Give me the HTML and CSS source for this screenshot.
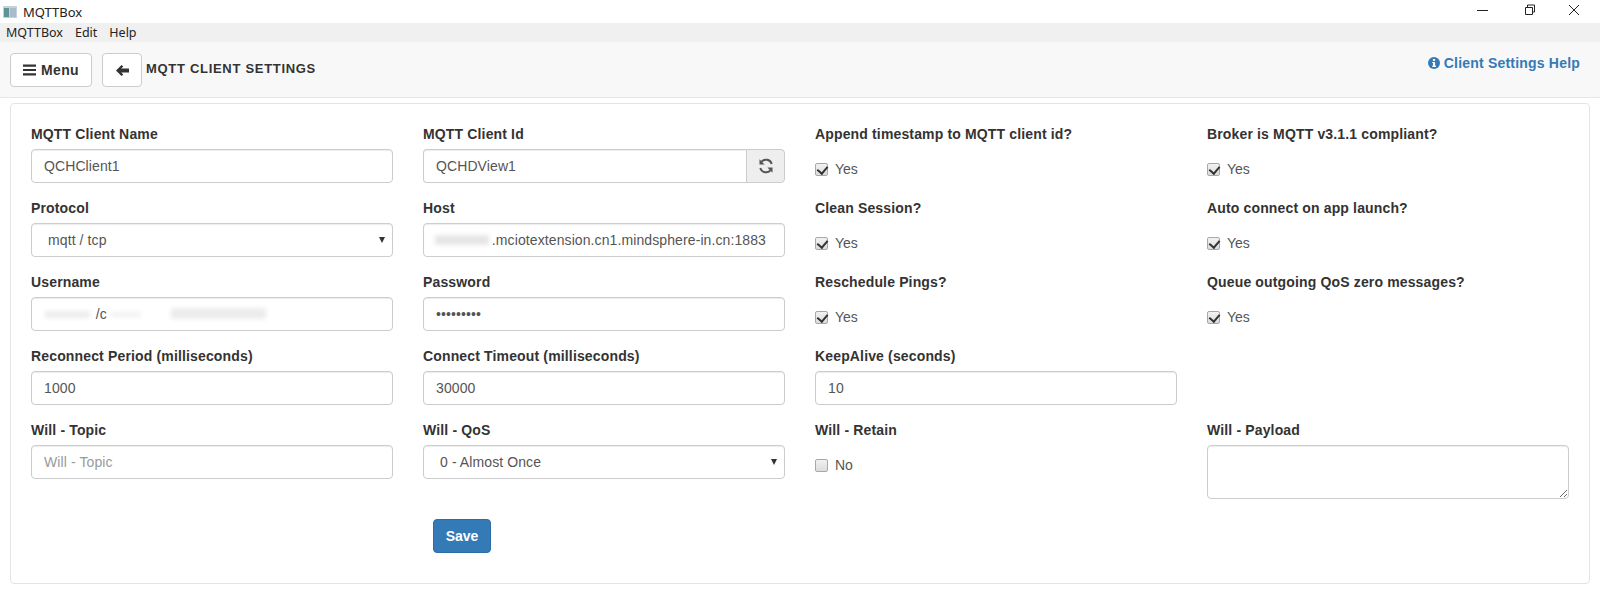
FILE: index.html
```html
<!DOCTYPE html>
<html lang="en">
<head>
<meta charset="utf-8">
<title>MQTTBox</title>
<link rel="stylesheet" href="styles.css">
</head>
<body>
<div class="titlebar">
  <div class="title-left">
    <svg class="app-icon" width="14" height="12" viewBox="0 0 14 12"><rect x="0" y="0" width="14" height="12" fill="#c5d2d6"/><rect x="1" y="2" width="5" height="9" fill="#5f9494"/><rect x="7" y="2" width="6" height="9" fill="#a9bccb"/></svg>
    <span>MQTTBox</span>
  </div>
  <div class="win-controls">
    <svg width="46" height="22" viewBox="0 0 46 22"><path d="M17 10.500h11" stroke="#222" fill="none"/></svg>
    <svg width="46" height="22" viewBox="0 0 46 22"><path d="M19.500 7.500h7v7h-7zM21.500 7.500v-2.500h7v7h-2" stroke="#222" fill="none"/></svg>
    <svg width="46" height="22" viewBox="0 0 46 22"><path d="M17 5l10 10M27 5l-10 10" stroke="#222" fill="none"/></svg>
  </div>
</div>
<div class="menubar"><span>MQTTBox</span><span>Edit</span><span>Help</span></div>
<nav class="navbar">
  <div class="nav-left">
    <button class="btn menu-btn" type="button">
      <svg width="13" height="12" viewBox="0 0 13 12"><path d="M0 0.500h13v2.200H0zM0 4.900h13v2.200H0zM0 9.300h13v2.200H0z" fill="#333"/></svg>
      <b>Menu</b>
    </button>
    <button class="btn back-btn" type="button">
      <svg width="13" height="11" viewBox="0 0 13 11"><path d="M5.500 0L7.300 1.600 5.200 3.600H13V7.400H5.200L7.300 9.400 5.500 11 0 5.500z" fill="#333"/></svg>
    </button>
    <b class="nav-title">MQTT CLIENT SETTINGS</b>
  </div>
  <a class="help-link" href="#">
    <svg width="12" height="12" viewBox="0 0 12 12"><circle cx="6" cy="6" r="6" fill="#337ab7"/><rect x="4.900" y="2" width="2.200" height="1.900" fill="#fff"/><path d="M4.200 4.900H7.100V8.800H8V10H4.200V8.800H5V6.100H4.200z" fill="#fff"/></svg>
    <b>Client Settings Help</b>
  </a>
</nav>
<main class="panel">
  <form class="form-grid">
    <div class="field"><label>MQTT Client Name</label><input class="control" type="text" value="QCHClient1"></div>
    <div class="field"><label>MQTT Client Id</label>
      <div class="input-group"><input class="control" type="text" value="QCHDView1"><span class="addon">
        <svg width="16" height="16" viewBox="0 0 14 14"><path d="M12 5.200A5.200 5.200 0 0 0 3 3.400M2 8.800A5.200 5.200 0 0 0 11 10.600" fill="none" stroke="#555" stroke-width="1.700"/><path d="M1.300 1.200v4.500h4.500zM12.700 12.800v-4.500h-4.500z" fill="#555"/></svg>
      </span></div>
    </div>
    <div class="field"><label>Append timestamp to MQTT client id?</label><div class="check"><input type="checkbox" checked><span>Yes</span></div></div>
    <div class="field"><label>Broker is MQTT v3.1.1 compliant?</label><div class="check"><input type="checkbox" checked><span>Yes</span></div></div>

    <div class="field"><label>Protocol</label><div class="select-wrap"><select class="control"><option>mqtt / tcp</option></select></div></div>
    <div class="field"><label>Host</label><div class="masked"><input class="control" type="text" value="              .mciotextension.cn1.mindsphere-in.cn:1883"><i class="smudge smudge-host"></i></div></div>
    <div class="field"><label>Clean Session?</label><div class="check"><input type="checkbox" checked><span>Yes</span></div></div>
    <div class="field"><label>Auto connect on app launch?</label><div class="check"><input type="checkbox" checked><span>Yes</span></div></div>

    <div class="field"><label>Username</label><div class="masked"><input class="control" type="text" value="             /c"><i class="smudge smudge-user-a"></i><i class="smudge smudge-user-b"></i><i class="smudge smudge-user-c"></i></div></div>
    <div class="field"><label>Password</label><input class="control" type="password" value="123456789"></div>
    <div class="field"><label>Reschedule Pings?</label><div class="check"><input type="checkbox" checked><span>Yes</span></div></div>
    <div class="field"><label>Queue outgoing QoS zero messages?</label><div class="check"><input type="checkbox" checked><span>Yes</span></div></div>

    <div class="field"><label>Reconnect Period (milliseconds)</label><input class="control" type="text" value="1000"></div>
    <div class="field"><label>Connect Timeout (milliseconds)</label><input class="control" type="text" value="30000"></div>
    <div class="field"><label>KeepAlive (seconds)</label><input class="control" type="text" value="10"></div>
    <div class="field"></div>

    <div class="field"><label>Will - Topic</label><input class="control" type="text" placeholder="Will - Topic"></div>
    <div class="field"><label>Will - QoS</label><div class="select-wrap"><select class="control"><option>0 - Almost Once</option></select></div></div>
    <div class="field"><label>Will - Retain</label><div class="check"><input type="checkbox"><span>No</span></div></div>
    <div class="field"><label>Will - Payload</label><textarea class="control payload"></textarea></div>

    <div class="save-cell"></div>
    <div class="save-cell"><button class="save" type="button">Save</button></div>
  </form>
</main>
</body>
</html>
```
FILE: styles.css
```css
* { box-sizing: border-box; }
html, body { margin: 0; padding: 0; }
body {
  width: 1600px;
  height: 590px;
  overflow: hidden;
  background: #fff;
  color: #333;
  font-family: "Liberation Sans", Arial, sans-serif;
  font-size: 14px;
}
.titlebar {
  height: 23px;
  display: flex;
  justify-content: space-between;
  background: #fff;
}
.title-left {
  display: flex;
  align-items: center;
  gap: 6px;
  padding-left: 3px;
  font-family: "Noto Sans", sans-serif;
  font-size: 13px;
  color: #222;
}
.app-icon { flex: none; }
.win-controls { display: flex; padding-right: 2px; }
.win-controls svg { display: block; }
.menubar {
  height: 19px;
  display: flex;
  align-items: center;
  gap: 12px;
  padding-left: 6px;
  background: #f0f0f0;
  font-family: "Noto Sans", sans-serif;
  font-size: 12.500px;
  color: #222;
}
.navbar {
  height: 56px;
  display: flex;
  justify-content: space-between;
  background: #f8f8f8;
  border-bottom: 1px solid #e7e7e7;
  padding: 11px 20px 0 10px;
}
.nav-left { display: flex; align-items: flex-start; }
.btn {
  height: 34px;
  display: flex;
  align-items: center;
  justify-content: center;
  background: #fff;
  border: 1px solid #ccc;
  border-radius: 4px;
  color: #333;
  font: inherit;
  padding: 0;
}
.menu-btn { width: 82px; gap: 5px; margin-right: 10px; }
.menu-btn b { letter-spacing: 0.4px; }
.back-btn { width: 40px; margin-right: 4px; }
.nav-title {
  font-size: 13px;
  letter-spacing: 0.700px;
  line-height: 32px;
  color: #333;
}
.help-link {
  display: flex;
  align-items: center;
  gap: 4px;
  height: 20px;
  color: #337ab7;
  text-decoration: none;
  letter-spacing: 0.200px;
}
.panel {
  height: 481px;
  margin: 5px 10px 0;
  padding: 20px 5px 0;
  border: 1px solid #e4e4e4;
  border-radius: 4px;
}
.form-grid {
  display: grid;
  grid-template-columns: repeat(4, 392px);
  grid-auto-rows: 74px;
}
.field { padding: 0 15px; }
.field label {
  display: block;
  height: 25px;
  line-height: 20px;
  font-weight: 700;
  letter-spacing: 0.150px;
  color: #333;
}
.control {
  display: block;
  width: 100%;
  height: 34px;
  padding: 6px 12px;
  border: 1px solid #ccc;
  border-radius: 4px;
  background: #fff;
  color: #555;
  font: inherit;
  letter-spacing: 0.100px;
  box-shadow: inset 0 1px 1px rgba(0,0,0,.075);
}
.control::placeholder { color: #999; opacity: 1; }
.input-group { display: flex; }
.input-group .control { border-radius: 4px 0 0 4px; border-right: 0; flex: 1; min-width: 0; }
.addon {
  width: 39px;
  height: 34px;
  flex: none;
  display: flex;
  align-items: center;
  justify-content: center;
  background: #eee;
  border: 1px solid #ccc;
  border-radius: 0 4px 4px 0;
}
.check {
  display: flex;
  align-items: center;
  gap: 7px;
  height: 20px;
  margin-top: 10px;
  color: #555;
}
.check input {
  appearance: none;
  position: relative;
  width: 13px;
  height: 13px;
  margin: 0;
  flex: none;
  background: linear-gradient(#f2f2f2, #dcdcdc);
  border: 1px solid #a8a8a8;
  border-radius: 2px;
}
.check input:checked::after {
  content: "";
  position: absolute;
  left: 3px;
  top: 0;
  width: 5px;
  height: 8px;
  border: solid #333;
  border-width: 0 2px 2px 0;
  transform: rotate(40deg);
}
.select-wrap { position: relative; }
.select-wrap .control { appearance: none; padding-left: 16px; }
.select-wrap::after {
  content: "";
  position: absolute;
  right: 8px;
  top: 14px;
  border: 3.500px solid transparent;
  border-top: 6px solid #333;
  border-bottom: 0;
}
.masked { position: relative; }
.smudge { position: absolute; display: block; background: #e6e6e6; filter: blur(2px); }
.smudge-host { left: 12px; top: 12px; width: 54px; height: 10px; }
.smudge-user-a { left: 14px; top: 14px; width: 45px; height: 7px; background: #ececec; }
.smudge-user-b { left: 80px; top: 15px; width: 30px; height: 5px; background: #f2f2f2; }
.smudge-user-c { left: 140px; top: 11px; width: 95px; height: 11px; background: #ececec; }
.payload { height: 54px; resize: both; min-width: 100%; max-width: 100%; }
.save-cell { padding: 0 25px; margin-top: 25px; }
.save {
  width: 58px;
  height: 34px;
  background: #337ab7;
  border: 1px solid #2e6da4;
  border-radius: 4px;
  color: #fff;
  font: inherit;
  font-weight: 700;
  padding: 0;
}
```
